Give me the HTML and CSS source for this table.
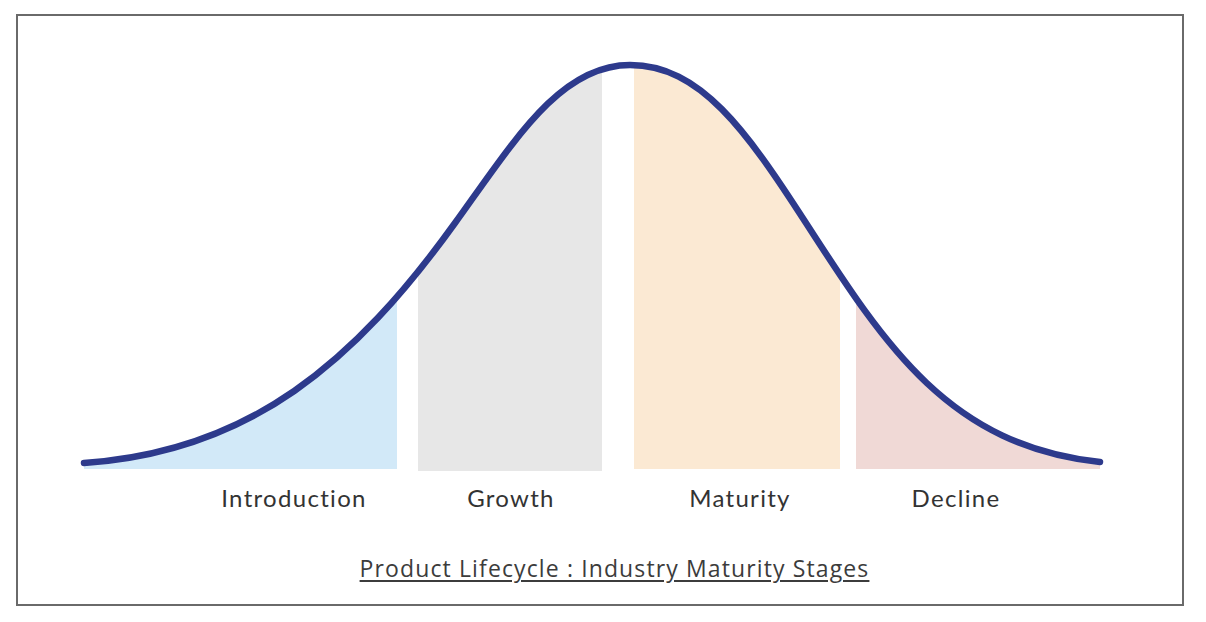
FILE: index.html
```html
<!DOCTYPE html>
<html lang="en">
<head>
<meta charset="utf-8">
<title>Product Lifecycle</title>
<link rel="stylesheet" href="styles.css">
</head>
<body>
<div class="frame">
  <svg class="chart" viewBox="18 16 1164 468" width="1164" height="468" xmlns="http://www.w3.org/2000/svg">
    <defs>
      <clipPath id="under">
        <path d="M84,463 C250,452 355,362 455,223 C515,140 560,65 630,65 C700,65 746,130 806,223 C886,347 950,446 1100,462 L1100,472 L84,472 Z"/>
      </clipPath>
    </defs>
    <g clip-path="url(#under)">
      <rect class="f-intro" x="84" y="40" width="313" height="429"/>
      <rect class="f-growth" x="418" y="40" width="184" height="431"/>
      <rect class="f-mature" x="634" y="40" width="206" height="429"/>
      <rect class="f-decline" x="856" y="40" width="250" height="429"/>
    </g>
    <path class="curve" d="M84,463 C250,452 355,362 455,223 C515,140 560,65 630,65 C700,65 746,130 806,223 C886,347 950,446 1100,462"/>
  </svg>
  <div class="labels">
    <span class="label">Introduction</span>
    <span class="label">Growth</span>
    <span class="label">Maturity</span>
    <span class="label">Decline</span>
  </div>
  <div class="title">Product Lifecycle : Industry Maturity Stages</div>
</div>
</body>
</html>
```
FILE: styles.css
```css
html, body {
  margin: 0;
  padding: 0;
  background: #ffffff;
}

body {
  padding: 14px 0 0 16px;
}

.frame {
  width: 1164px;
  border: 2px solid #6a6a6a;
  padding-bottom: 22px;
  background: #ffffff;
}

.chart {
  display: block;
}

.curve {
  fill: none;
  stroke: #2d3a8c;
  stroke-width: 6.5;
  stroke-linecap: round;
  stroke-linejoin: round;
}

.f-intro { fill: #d2e9f8; }
.f-growth { fill: #e7e7e7; }
.f-mature { fill: #fbe9d3; }
.f-decline { fill: #f0d9d6; }

.labels {
  display: grid;
  grid-template-columns: 220px 214px 244px 188px;
  padding-left: 166px;
  height: 28px;
}

.label {
  font-family: Lato, "Open Sans", sans-serif;
  font-size: 24px;
  letter-spacing: 1.3px;
  line-height: 28px;
  color: #333333;
  text-align: center;
}

.title {
  margin-top: 42px;
  padding-left: 29px;
  font-family: "Open Sans", "Liberation Sans", sans-serif;
  font-size: 23px;
  letter-spacing: 1.12px;
  line-height: 28px;
  color: #3c3c3c;
  text-align: center;
  text-decoration: underline;
  text-decoration-thickness: 1.5px;
  text-underline-offset: 3px;
}
```
